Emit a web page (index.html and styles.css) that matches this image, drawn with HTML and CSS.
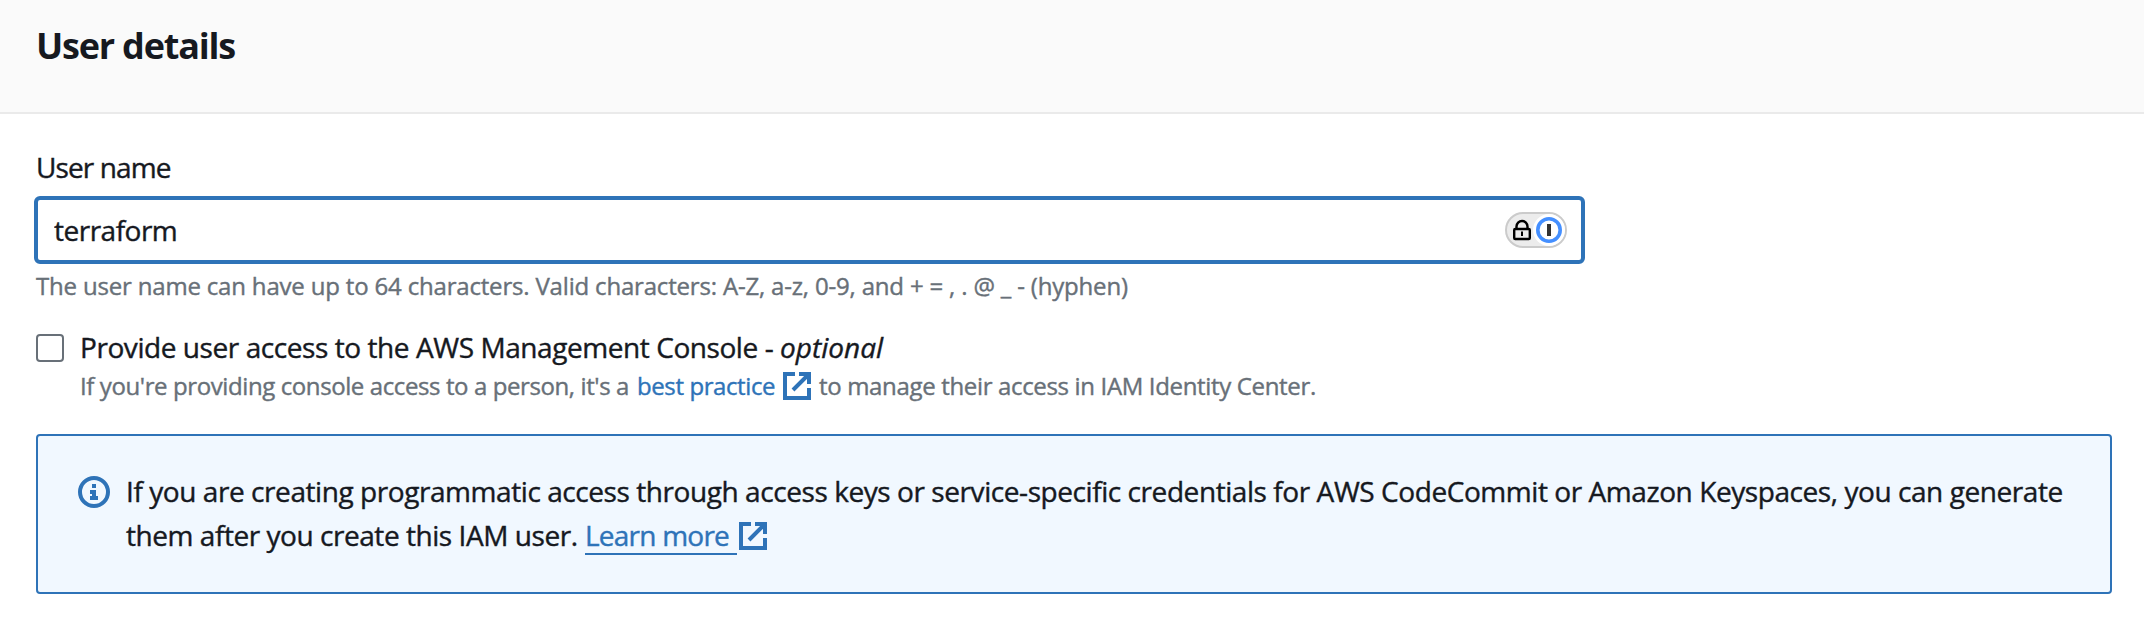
FILE: index.html
```html
<!DOCTYPE html>
<html lang="en">
<head>
<meta charset="utf-8">
<title>User details</title>
<link rel="stylesheet" href="styles.css">
</head>
<body>
<header class="panel-header"><h2 class="title">User details</h2></header>
<main class="panel-body">
  <label class="label" for="username">User name</label>
  <div class="field">
    <input class="input" id="username" type="text" value="terraform">
    <svg class="manager" width="62" height="36" viewBox="0 0 62 36">
      <rect x="1" y="1" width="60" height="34" rx="17" fill="#ececec" stroke="#cbcbcb" stroke-width="2"/>
      <circle cx="44" cy="18" r="16" fill="#fff"/>
      <circle cx="44" cy="18" r="11.200" fill="#fff" stroke="#448fff" stroke-width="3.600"/>
      <rect x="42" y="12" width="4" height="12" fill="#333"/>
      <rect x="9.200" y="17" width="15.600" height="10" rx="1" fill="none" stroke="#000" stroke-width="2.400"/>
      <path d="M11.500 17v-2.500a5.500 5.500 0 0 1 11 0V17" fill="none" stroke="#000" stroke-width="2.400"/>
      <rect x="16" y="19.500" width="2" height="4.500" fill="#000"/>
    </svg>
  </div>
  <p class="hint">The user name can have up to 64 characters. Valid characters: A-Z, a-z, 0-9, and + = , . @ _ - (hyphen)</p>
  <div class="check-row">
    <span class="checkbox"></span>
    <div class="check-text">
      <p class="check-label">Provide user access to the AWS Management Console - <i class="optional">optional</i></p>
      <p class="check-hint"><span class="lead">If you're providing console access to a person, it's a</span><a class="link">best practice</a><svg class="external" width="28" height="28" viewBox="0 0 28 28"><path d="M12 2H2v24h24V16M16 2h10v10M25 3L10 18" fill="none" stroke="#2e73b8" stroke-width="4"/></svg><span class="tail">to manage their access in IAM Identity Center.</span></p>
    </div>
  </div>
  <section class="alert">
    <svg class="info" width="32" height="32" viewBox="0 0 32 32"><circle cx="16" cy="16" r="14" fill="none" stroke="#2e73b8" stroke-width="4"/><path d="M14 8h4v4h-4zM12 14h6v6h2v4h-8v-4h2v-2h-2z" fill="#2e73b8"/></svg>
    <div class="alert-text">
      <p class="line-one">If you are creating programmatic access through access keys or service-specific credentials for AWS CodeCommit or Amazon Keyspaces, you can generate</p>
      <p class="line-two"><span class="line-lead">them after you create this IAM user.</span><a class="learn">Learn more</a><svg class="external" width="28" height="28" viewBox="0 0 28 28"><path d="M12 2H2v24h24V16M16 2h10v10M25 3L10 18" fill="none" stroke="#2e73b8" stroke-width="4"/></svg></p>
    </div>
  </section>
</main>
</body>
</html>
```
FILE: styles.css
```css
* { box-sizing: border-box; margin: 0; }

body {
  width: 2144px;
  height: 628px;
  overflow: hidden;
  background: #fff;
  color: #16191f;
  font-family: "Open Sans", "Noto Sans", sans-serif;
  font-size: 28px;
  line-height: 44px;
  white-space: nowrap;
  -webkit-text-stroke: 0.4px currentColor;
}

.panel-header {
  height: 114px;
  padding: 24px 36px 0;
  background: #fafafa;
  border-bottom: 2px solid #eaeaea;
}

.title {
  font-size: 36px;
  font-weight: 700;
  line-height: 44px;
  letter-spacing: -1.2px;
  -webkit-text-stroke: 0;
}

.panel-body { padding: 31px 32px 0 36px; }

.label {
  display: block;
  letter-spacing: -0.9px;
}

.field {
  display: flex;
  align-items: center;
  width: 1551px;
  height: 68px;
  margin: 7px 0 0 -2px;
  padding-right: 14px;
  border: 4px solid #2e73b8;
  border-radius: 6px;
}

.input {
  flex: 1;
  height: 60px;
  padding: 0 16px 1px;
  border: 0;
  outline: 0;
  background: transparent;
  color: inherit;
  font: inherit;
  letter-spacing: -0.5px;
}

.hint {
  margin-top: 4px;
  color: #687078;
  font-size: 24px;
  line-height: 36px;
  letter-spacing: -0.18px;
}

.check-row {
  display: flex;
  gap: 16px;
  margin-top: 21px;
}

.checkbox {
  width: 28px;
  height: 28px;
  margin-top: 9px;
  border: 2px solid #687078;
  border-radius: 4px;
}

.check-label { height: 43px; letter-spacing: -0.43px; }
.optional { letter-spacing: 0; }

.check-hint {
  display: flex;
  align-items: center;
  color: #687078;
  font-size: 24px;
  line-height: 36px;
}

.lead { width: 557px; letter-spacing: -0.4px; }
.link { width: 146px; color: #2e73b8; letter-spacing: -0.4px; }
.tail { margin-left: 8px; letter-spacing: -0.34px; }

.alert {
  display: flex;
  gap: 16px;
  height: 160px;
  margin-top: 30px;
  padding: 33px 40px;
  background: #f1f8ff;
  border: 2px solid #2e73b8;
  border-radius: 4px;
}

.info { margin-top: 7px; }
.line-one { letter-spacing: -0.43px; }

.line-two { display: flex; align-items: center; }
.line-two .external { margin-top: 2px; }
.line-lead { width: 459px; letter-spacing: -0.45px; }

.learn {
  width: 152px;
  height: 40px;
  margin-right: 2px;
  border-bottom: 2px solid #2e73b8;
  color: #2e73b8;
  line-height: 40px;
  letter-spacing: -0.77px;
}
```
